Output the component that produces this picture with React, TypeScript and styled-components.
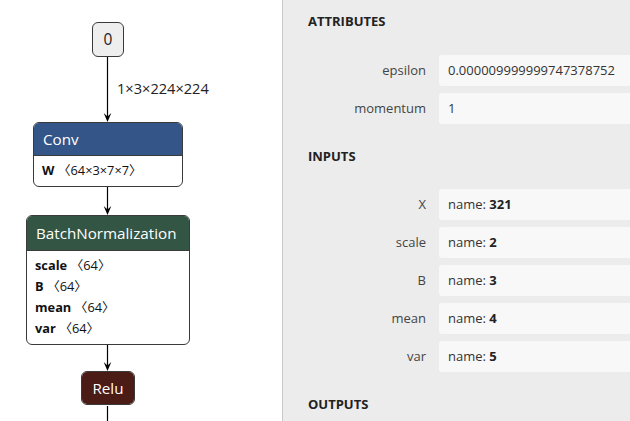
import React from "react";
import styled, { createGlobalStyle } from "styled-components";

const Global = createGlobalStyle`
  html, body { margin: 0; padding: 0; width: 630px; height: 421px; overflow: hidden; background: #fff; }
  body { font-family: "Open Sans", "Noto Sans", "Noto Sans CJK SC", sans-serif; color: #222; }
`;

const Page = styled.div`
  display: flex;
  width: 630px;
  height: 421px;
`;

const Canvas = styled.div`
  position: relative;
  flex: none;
  width: 282px;
  height: 421px;
  background: #fff;
`;

const Edges = styled.svg`
  position: absolute;
  left: 0;
  top: 0;
  width: 282px;
  height: 421px;
`;

const Node = styled.div<{ $x: number; $y: number; $w: number }>`
  position: absolute;
  left: ${(p) => p.$x}px;
  top: ${(p) => p.$y}px;
  width: ${(p) => p.$w}px;
  box-sizing: border-box;
  border: 1.5px solid #3a3a3a;
  border-radius: 6px;
  overflow: hidden;
  background: #fff;
`;

const NodeHeader = styled.div<{ $bg: string; $h: number; $center?: boolean }>`
  height: ${(p) => p.$h}px;
  line-height: ${(p) => p.$h + 1}px;
  background: ${(p) => p.$bg};
  color: #fff;
  font-size: 15.2px;
  padding: 0 9px;
  text-align: ${(p) => (p.$center ? "center" : "left")};
  border-bottom: 1px solid #3a3a3a;
  white-space: nowrap;
  &:last-child { border-bottom: none; }
`;

const NodeBody = styled.div`
  padding: 4px 8px 5px;
`;

const AttrLine = styled.div`
  font-size: 12.8px;
  line-height: 21px;
  color: #111;
  white-space: nowrap;
  b { font-weight: 700; }
`;

const InputNode = styled.div<{ $x: number; $y: number }>`
  position: absolute;
  left: ${(p) => p.$x}px;
  top: ${(p) => p.$y}px;
  width: 32px;
  height: 35px;
  box-sizing: border-box;
  border: 1.5px solid #3a3a3a;
  border-radius: 6px;
  background: #eee;
  font-size: 15.5px;
  line-height: 32px;
  text-align: center;
  color: #222;
`;

const EdgeLabel = styled.div<{ $x: number; $y: number }>`
  position: absolute;
  left: ${(p) => p.$x}px;
  top: ${(p) => p.$y}px;
  font-size: 14.6px;
  line-height: 18px;
  color: #222;
  white-space: nowrap;
`;

const Sidebar = styled.aside`
  flex: 1;
  min-width: 0;
  background: #ececec;
  border-left: 1px solid #c8c8c8;
  padding-top: 12px;
  overflow: hidden;
`;

const Section = styled.section`
  margin-bottom: 23px;
`;

const Heading = styled.div<{ $gap: number }>`
  padding-left: 25px;
  font-size: 13px;
  font-weight: 700;
  line-height: 18px;
  color: #222;
  text-transform: uppercase;
  margin-bottom: ${(p) => p.$gap}px;
`;

const Rows = styled.div`
  display: grid;
  grid-template-columns: 143px 1fr;
  column-gap: 13px;
  row-gap: 7px;
`;

const Label = styled.div`
  text-align: right;
  font-size: 13px;
  line-height: 31px;
  color: #444;
`;

const Value = styled.div`
  height: 31px;
  line-height: 31px;
  background: #f8f8f8;
  border-radius: 3px 0 0 3px;
  padding: 0 9px;
  font-size: 13px;
  color: #333;
  white-space: nowrap;
  b { font-weight: 700; color: #222; }
`;

const Arrow: React.FC<{ x: number; y1: number; y2: number; head?: boolean }> = ({ x, y1, y2, head = true }) => (
  <g>
    <line x1={x} y1={y1} x2={x} y2={head ? y2 - 4 : y2} stroke="#000" strokeWidth={1.2} />
    {head && <path d={`M${x} ${y2} L${x - 3.8} ${y2 - 9} L${x} ${y2 - 5.5} L${x + 3.8} ${y2 - 9} Z`} fill="#000" />}
  </g>
);

const attributes = [
  { name: "epsilon", value: "0.000009999999747378752" },
  { name: "momentum", value: "1" },
];

const inputs = [
  { name: "X", id: "321" },
  { name: "scale", id: "2" },
  { name: "B", id: "3" },
  { name: "mean", id: "4" },
  { name: "var", id: "5" },
];

const bnAttrs = ["scale", "B", "mean", "var"];

export default function App() {
  return (
    <>
      <Global />
      <Page>
        <Canvas>
          <Edges viewBox="0 0 282 421">
            <Arrow x={107.5} y1={56} y2={122} />
            <Arrow x={107.5} y1={186} y2={215} />
            <Arrow x={107.5} y1={342} y2={371} />
            <Arrow x={107.5} y1={406} y2={421} head={false} />
          </Edges>
          <InputNode $x={92} $y={22}>0</InputNode>
          <EdgeLabel $x={117} $y={79}>1×3×224×224</EdgeLabel>
          <Node $x={33} $y={122} $w={150}>
            <NodeHeader $bg="rgb(51, 85, 136)" $h={32}>Conv</NodeHeader>
            <NodeBody>
              <AttrLine>
                <b>W</b> 〈64×3×7×7〉
              </AttrLine>
            </NodeBody>
          </Node>
          <Node $x={26} $y={215} $w={164}>
            <NodeHeader $bg="rgb(51, 85, 68)" $h={34}>BatchNormalization</NodeHeader>
            <NodeBody>
              {bnAttrs.map((a) => (
                <AttrLine key={a}>
                  <b>{a}</b> 〈64〉
                </AttrLine>
              ))}
            </NodeBody>
          </Node>
          <Node $x={81} $y={371} $w={54}>
            <NodeHeader $bg="rgb(75, 27, 22)" $h={32} $center>Relu</NodeHeader>
          </Node>
        </Canvas>
        <Sidebar>
          <Section>
            <Heading $gap={25}>Attributes</Heading>
            <Rows>
              {attributes.map((a) => (
                <React.Fragment key={a.name}>
                  <Label>{a.name}</Label>
                  <Value>{a.value}</Value>
                </React.Fragment>
              ))}
            </Rows>
          </Section>
          <Section>
            <Heading $gap={24}>Inputs</Heading>
            <Rows>
              {inputs.map((i) => (
                <React.Fragment key={i.name}>
                  <Label>{i.name}</Label>
                  <Value>
                    name: <b>{i.id}</b>
                  </Value>
                </React.Fragment>
              ))}
            </Rows>
          </Section>
          <Section>
            <Heading $gap={24}>Outputs</Heading>
          </Section>
        </Sidebar>
      </Page>
    </>
  );
}
